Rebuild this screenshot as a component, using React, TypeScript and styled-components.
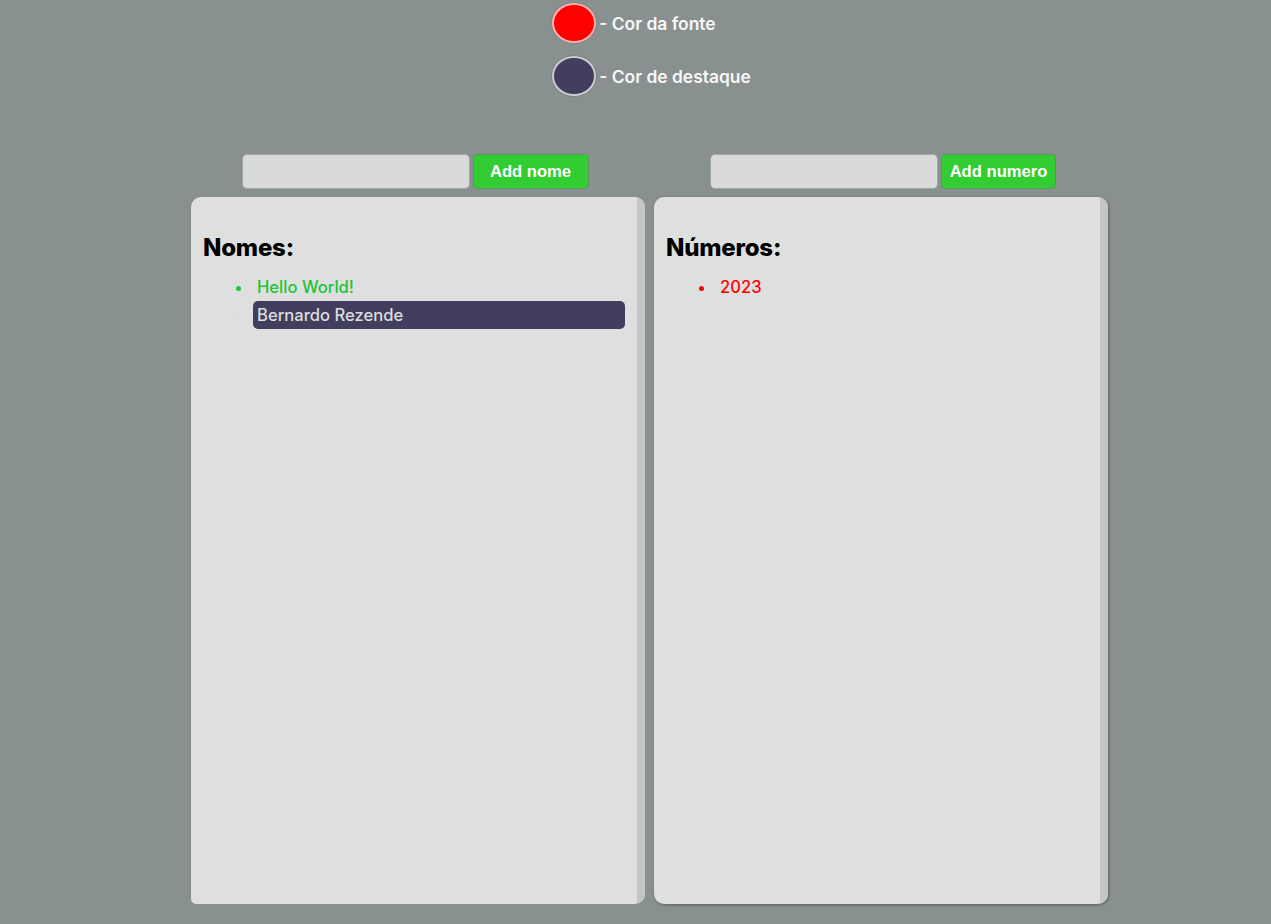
import React from "react";
import styled, { createGlobalStyle } from "styled-components";

const Global = createGlobalStyle`
  html, body { margin: 0; padding: 0; }
  body {
    background: #889190;
    font-family: Inter, "Liberation Sans", Arial, sans-serif;
    height: 924px;
    overflow: hidden;
  }
`;

const Page = styled.div`
  width: 917px;
  margin-left: 191px;
  display: flex;
  flex-direction: column;
`;

const ColorSection = styled.div`
  display: flex;
  flex-direction: column;
  align-items: flex-start;
  align-self: center;
  gap: 13px;
  padding-top: 3px;
  margin-left: 4px;
`;

const ColorRow = styled.div`
  display: flex;
  align-items: center;
  gap: 3px;
`;

const Swatch = styled.span<{ $fill: string; $ring: string }>`
  display: block;
  box-sizing: border-box;
  width: 44px;
  height: 40px;
  border-radius: 50%;
  background: ${(p) => p.$fill};
  border: 2px solid ${(p) => p.$ring};
  box-shadow: 0 0 0 1px rgba(120, 120, 120, 0.5);
`;

const ColorLabel = styled.span`
  color: #f7f7f7;
  font-family: Inter, "Liberation Sans", Arial, sans-serif;
  font-weight: 600;
  font-size: 17.4px;
`;

const Columns = styled.div`
  display: flex;
  gap: 9px;
  margin-top: 58px;
`;

const Column = styled.div`
  width: 454px;
  display: flex;
  flex-direction: column;
  gap: 8px;
`;

const AddRow = styled.div<{ $shift: number }>`
  display: flex;
  justify-content: center;
  gap: 3px;
  height: 35px;
  transform: translateX(${(p) => p.$shift}px);
`;

const TextInput = styled.input`
  box-sizing: border-box;
  width: 228px;
  height: 35px;
  background: #d9dbda;
  border: 1px solid #a3a7a6;
  border-radius: 5px;
  outline: none;
`;

const AddButton = styled.button<{ $w: number }>`
  box-sizing: border-box;
  width: ${(p) => p.$w}px;
  height: 35px;
  background: #32cd32;
  color: #ffffff;
  border: 1px solid #5c9a5c;
  border-radius: 4px;
  font-family: "Liberation Sans", Arial, sans-serif;
  font-weight: bold;
  font-size: 16.6px;
  padding: 0;
`;

const Panel = styled.div<{ $radius: string; $shadow: boolean }>`
  height: 707px;
  display: flex;
  background: #dee0df;
  border-radius: ${(p) => p.$radius};
  overflow: hidden;
  box-shadow: ${(p) => (p.$shadow ? "1px 1px 3px rgba(0,0,0,0.35)" : "none")};
`;

const PanelBody = styled.div`
  flex: 1;
  padding: 12px;
`;

const Track = styled.div`
  width: 8px;
  background: #c4c6c5;
`;

const Heading = styled.h2`
  margin: 25px 0 11px;
  font-size: 24px;
  line-height: 28px;
  font-weight: 800;
  letter-spacing: -0.2px;
  color: #000;
`;

const List = styled.ul`
  margin: 0;
  padding-left: 50px;
`;

const Item = styled.li<{ $color: string; $bg?: string }>`
  color: ${(p) => p.$color};
  background: ${(p) => p.$bg || "transparent"};
  font-size: 16.6px;
  font-weight: 500;
  line-height: 28px;
  padding: 0 4px;
  border-radius: 5px;
`;

export default function App() {
  return (
    <>
      <Global />
      <Page>
        <ColorSection>
          <ColorRow>
            <Swatch $fill="#ff0000" $ring="#ffb0b0" />
            <ColorLabel>- Cor da fonte</ColorLabel>
          </ColorRow>
          <ColorRow>
            <Swatch $fill="#413e5e" $ring="#cbcbd0" />
            <ColorLabel>- Cor de destaque</ColorLabel>
          </ColorRow>
        </ColorSection>
        <Columns>
          <Column>
            <AddRow $shift={-3}>
              <TextInput />
              <AddButton $w={116}>Add nome</AddButton>
            </AddRow>
            <Panel $radius="10px 10px 10px 5px" $shadow={false}>
              <PanelBody>
                <Heading>Nomes:</Heading>
                <List>
                  <Item $color="#22c33a">Hello World!</Item>
                  <Item $color="#dcdede" $bg="#413e5e">
                    Bernardo Rezende
                  </Item>
                </List>
              </PanelBody>
              <Track />
            </Panel>
          </Column>
          <Column>
            <AddRow $shift={2}>
              <TextInput />
              <AddButton $w={115}>Add numero</AddButton>
            </AddRow>
            <Panel $radius="10px" $shadow={true}>
              <PanelBody>
                <Heading>Números:</Heading>
                <List>
                  <Item $color="#ff0000">2023</Item>
                </List>
              </PanelBody>
              <Track />
            </Panel>
          </Column>
        </Columns>
      </Page>
    </>
  );
}
